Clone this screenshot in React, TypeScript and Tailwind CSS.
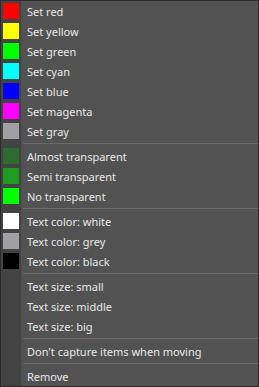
import React from "react";

type Item = { label: string; color?: string } | "sep";

const items: Item[] = [
  { label: "Set red", color: "#ff0000" },
  { label: "Set yellow", color: "#ffff00" },
  { label: "Set green", color: "#00ff00" },
  { label: "Set cyan", color: "#00ffff" },
  { label: "Set blue", color: "#0000ff" },
  { label: "Set magenta", color: "#ff00ff" },
  { label: "Set gray", color: "#a0a0a4" },
  "sep",
  { label: "Almost transparent", color: "#2e6b2e" },
  { label: "Semi transparent", color: "#1f9c1f" },
  { label: "No transparent", color: "#00ff00" },
  "sep",
  { label: "Text color: white", color: "#ffffff" },
  { label: "Text color: grey", color: "#a0a0a4" },
  { label: "Text color: black", color: "#000000" },
  "sep",
  { label: "Text size: small" },
  { label: "Text size: middle" },
  { label: "Text size: big" },
  "sep",
  { label: "Don't capture items when moving" },
  "sep",
  { label: "Remove" },
];

export default function App() {
  return (
    <div
      className="w-[259px] h-[387px] border border-[#2b2b2b] bg-[#525252] flex flex-col"
      style={{ fontFamily: '"Noto Sans", sans-serif' }}
    >
      {items.map((it, i) =>
        it === "sep" ? (
          <div key={i} className="flex h-[5px]">
            <div className="w-[20px] bg-[#434343]" />
            <div className="flex-1 flex items-center pl-[2px]">
              <div className="h-px w-full bg-[#6b6b6b]" />
            </div>
          </div>
        ) : (
          <div key={i} className="flex h-[20px]">
            <div className="w-[20px] bg-[#434343] flex items-center justify-center">
              {it.color && (
                <div className="w-[16px] h-[16px]" style={{ backgroundColor: it.color }} />
              )}
            </div>
            <div className="flex-1 flex items-center pl-[6px] pt-[1px] text-[11px] text-[#e8e8e8] leading-none whitespace-nowrap">
              {it.label}
            </div>
          </div>
        )
      )}
    </div>
  );
}
